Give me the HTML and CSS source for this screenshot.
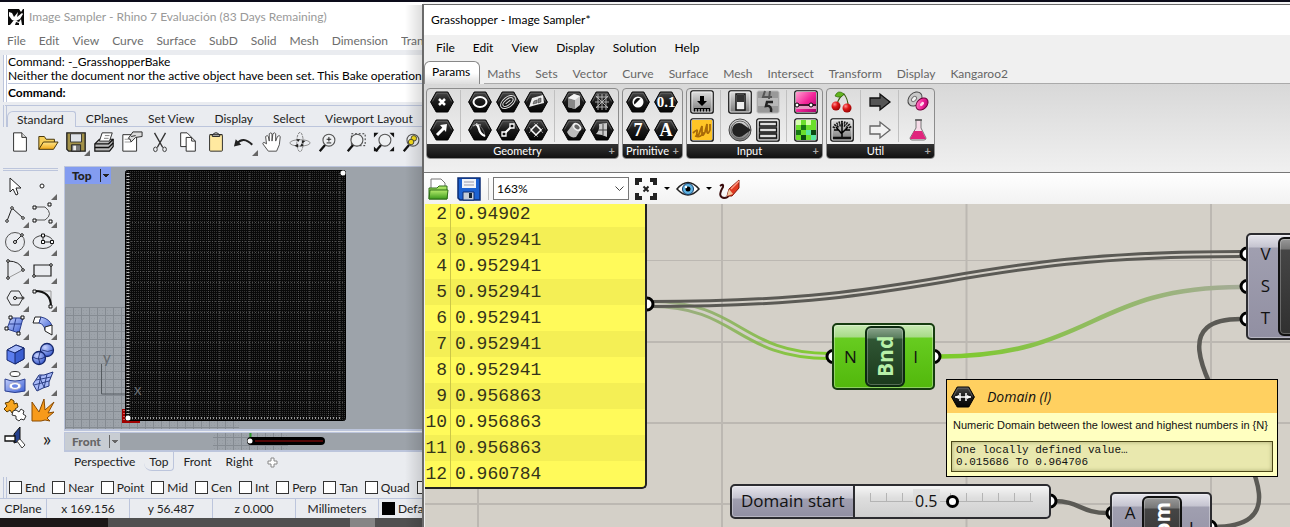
FILE: index.html
```html
<!DOCTYPE html>
<html lang="en">
<head>
<meta charset="utf-8">
<title>Grasshopper - Image Sampler</title>
<link rel="stylesheet" href="styles.css">
</head>
<body>
<svg class="defs" aria-hidden="true">
  <defs>
    <linearGradient id="gHex" x1="0" y1="0" x2="0" y2="1"><stop offset="0" stop-color="#4a4a4a"/><stop offset=".45" stop-color="#1c1c1c"/><stop offset="1" stop-color="#050505"/></linearGradient>
    <linearGradient id="gGray" x1="0" y1="0" x2="0" y2="1"><stop offset="0" stop-color="#e2e2e2"/><stop offset="1" stop-color="#757575"/></linearGradient>
    <linearGradient id="gFold" x1="0" y1="0" x2="0" y2="1"><stop offset="0" stop-color="#ffe68a"/><stop offset="1" stop-color="#f0a818"/></linearGradient>
    <linearGradient id="gBlue" x1="0" y1="0" x2="1" y2="1"><stop offset="0" stop-color="#c4d0fb"/><stop offset="1" stop-color="#3c60d6"/></linearGradient>
    <linearGradient id="gPink" x1="0" y1="0" x2="1" y2="1"><stop offset="0" stop-color="#ff9fd0"/><stop offset=".5" stop-color="#f5259a"/><stop offset="1" stop-color="#a8006c"/></linearGradient>
    <linearGradient id="gGreen" x1="0" y1="0" x2="0" y2="1"><stop offset="0" stop-color="#b6ec6e"/><stop offset="1" stop-color="#3d9c1c"/></linearGradient>
    <radialGradient id="gBall" cx=".35" cy=".3" r=".8"><stop offset="0" stop-color="#c8d4ff"/><stop offset="1" stop-color="#2c50c8"/></radialGradient>
    <radialGradient id="gCherry" cx=".35" cy=".3" r=".8"><stop offset="0" stop-color="#ff9090"/><stop offset=".4" stop-color="#e01818"/><stop offset="1" stop-color="#800"/></radialGradient>
    <symbol id="hex" viewBox="0 0 24 24"><path d="M.6 12 6.2 2h11.6l5.6 10-5.6 10H6.2z" fill="url(#gHex)" stroke="#000"/><path d="M2.4 11.5 6.9 3.2h10.2l4.5 8.3" fill="none" stroke="#777" stroke-width=".6"/></symbol>
    <symbol id="sq" viewBox="0 0 24 24"><rect x=".8" y=".8" width="22.400" height="22.400" rx="2" fill="url(#gGray)" stroke="#111" stroke-width="1.300"/><rect x="2" y="2" width="20" height="20" rx="1" fill="none" stroke="#f4f4f4" stroke-width=".8"/></symbol>
    <symbol id="lens" viewBox="0 0 24 24"><path d="m9 15-6 7" stroke="#111" stroke-width="2.500"/><circle cx="13" cy="10" r="6.500" fill="#eef0f2" stroke="#555" stroke-width="1.200"/></symbol>
    <pattern id="mesh" x="125" y="3" width="4" height="4" patternUnits="userSpaceOnUse"><rect width="4" height="4" fill="#090909"/><path d="M0 1h1v1H0zM2 1h1v1H2zM0 3h1v1H0zM2 3h1v1H2z" fill="#343434"/></pattern>
    <pattern id="meshCol" x="83" width="30" height="2" patternUnits="userSpaceOnUse"><path d="M0 0h1v1H0zM11 0h1v1h-1z" fill="#777"/></pattern>
    <pattern id="meshRow" y="14" width="3" height="30" patternUnits="userSpaceOnUse"><path d="M0 0h1v1H0zM1 11h1v1H1z" fill="#777"/></pattern>
    <pattern id="cplane" width="8" height="8" patternUnits="userSpaceOnUse" x="0" y="140"><path d="M0 .5h8M.5 0v8" stroke="#858b92"/><path d="M2 3h1v1H2zM5 3h1v1H5zM2 6h1v1H2zM5 6h1v1H5z" fill="#949aa1"/></pattern>
  </defs>
</svg>

<div class="desktop">
  <div class="strip"></div>

  <section class="rhino">
    <header class="rhino-title">
      <svg class="i16" viewBox="0 0 16 16"><path d="M0 0h16v16H0z" fill="#0a0a0a"/><path d="M1 3l3 1 2 4 4-5-1 5 5-4 1 1-3 5-4 2-4-1-3-4zM11 0l4 0-2 3z" fill="#fff"/><path d="M2 16l4-5 5 2 2-3 1 6z" fill="#fff"/><path d="M7 16l1-3 3 1 0 2z" fill="#0a0a0a"/></svg>
      <h1>Image Sampler - Rhino 7 Evaluación (83 Days Remaining)</h1>
    </header>
    <nav class="rhino-menu">
      <button>File</button><button>Edit</button><button>View</button><button>Curve</button><button>Surface</button><button>SubD</button><button>Solid</button><button>Mesh</button><button>Dimension</button><button>Transform</button>
    </nav>
    <div class="command">
      <p>Command: -_GrasshopperBake</p>
      <p>Neither the document nor the active object have been set. This Bake operation</p>
      <label class="prompt"><b>Command:</b><input type="text" aria-label="Command"></label>
    </div>
    <div class="rhino-tabs">
      <button class="on">Standard</button><button>CPlanes</button><button>Set View</button><button>Display</button><button>Select</button><button>Viewport Layout</button>
    </div>
    <div class="rhino-tools">
      <button aria-label="New"><svg viewBox="0 0 24 24"><path d="M5 2h9l5 5v15H5z" fill="#fff" stroke="#222"/><path d="M14 2v5h5" fill="#ddd" stroke="#222"/></svg></button>
      <button aria-label="Open"><svg viewBox="0 0 24 24"><path d="M2 20V6h6l2 3h9v4" fill="#f6cf5a" stroke="#3b2b00"/><path d="M2 20l5-8h16l-5 8z" fill="url(#gFold)" stroke="#3b2b00"/></svg></button>
      <button aria-label="Save" class="fly"><svg viewBox="0 0 24 24"><path d="M2 2h20v20H4l-2-2z" fill="#a39249" stroke="#222" stroke-width="1.500"/><path d="M6 3h12v9H6z" fill="#dfe3e8" stroke="#333"/><path d="M7 15h10v7H7z" fill="#777" stroke="#222"/><path d="M9 16h3v5H9z" fill="#eee"/></svg></button>
      <button aria-label="Print"><svg viewBox="0 0 24 24"><path d="M2 14l5-5h15v8l-4 5H2z" fill="#bbb" stroke="#111" stroke-width="1.300"/><path d="M7 11l3-9h11l-3 9z" fill="#fff" stroke="#222"/><path d="M13 5h5M12 8h5" stroke="#777"/><path d="M2 14h15l5-5M2 18h15l5-5" fill="none" stroke="#111" stroke-width="1.500"/></svg></button>
      <button aria-label="Properties"><svg viewBox="0 0 24 24"><path d="M2 4h15v18H2z" fill="#fff" stroke="#222"/><path d="M4 9h8M4 12h7" stroke="#999"/><path d="M8 8l5-7h10v5l-7 1-5 5-1-3z" fill="#ddd" stroke="#222"/><path d="M11 6l5-1" stroke="#222"/></svg></button>
      <button aria-label="Cut"><svg viewBox="0 0 24 24"><path d="M6 2l9 16M18 2 9 18" stroke="#333" stroke-width="1.500"/><ellipse cx="7" cy="20" rx="2" ry="2.500" fill="none" stroke="#333"/><ellipse cx="17" cy="20" rx="2" ry="2.500" fill="none" stroke="#333"/></svg></button>
      <button aria-label="Copy"><svg viewBox="0 0 24 24"><path d="M4 2h7l4 4v11H4z" fill="#fff" stroke="#222"/><path d="M10 7h6l4 4v11H10z" fill="#fff" stroke="#222"/><path d="M16 7v4h4" fill="none" stroke="#222"/></svg></button>
      <button aria-label="Paste"><svg viewBox="0 0 24 24"><rect x="5" y="4" width="14" height="18" rx="1" fill="#ffe9a0" stroke="#222"/><path d="M5 4h14M8 6V4l3-2h2l3 2v2z" fill="#bbb" stroke="#222"/></svg></button>
      <button aria-label="Undo" class="fly"><svg viewBox="0 0 24 24"><path d="M4 14q7-9 17 1" fill="none" stroke="#222" stroke-width="2.200"/><path d="M1 17l2-8 6 6z" fill="#222"/></svg></button>
      <button aria-label="Pan"><svg viewBox="0 0 24 24"><path d="M8 22 2 14q0-3 4 0L5 6q2-2 3 0l1 5V3q2-2 3 0v8l1-8q2-2 3 0v8l2-5q2-2 3 0l-1 9-3 7z" fill="#fff" stroke="#444"/></svg></button>
      <button aria-label="Rotate view"><svg viewBox="0 0 24 24"><ellipse cx="12" cy="13" rx="11" ry="3.500" fill="none" stroke="#888"/><ellipse cx="12" cy="12" rx="3.500" ry="10.500" fill="none" stroke="#777" stroke-dasharray="3 1"/><path d="M8 9l4 0-2 3zM16 16l-4 1 2-4zM6 16l4-2v4zM18 11l-4-1v4z" fill="#222"/></svg></button>
      <button aria-label="Zoom"><svg viewBox="0 0 24 24"><use href="#lens"/><path d="M10.500 9h5M13 6.500v5M10.500 13h5" stroke="#111"/></svg></button>
      <button aria-label="Zoom window"><svg viewBox="0 0 24 24"><rect x="7" y="3" width="15" height="13" fill="none" stroke="#222" stroke-dasharray="2 2"/><use href="#lens"/></svg></button>
      <button aria-label="Zoom extents"><svg viewBox="0 0 24 24"><use href="#lens"/><path d="M1 2h5L1 7zM23 2h-5l5 5zM23 22h-5l5-5zM1 22v-5l5 5z" fill="#111"/></svg></button>
      <button aria-label="Zoom selected"><svg viewBox="0 0 24 24"><use href="#lens"/><circle cx="14" cy="8" r="3" fill="#f7dd1a" stroke="#443"/><circle cx="11" cy="12" r="3" fill="#f7dd1a" stroke="#443"/></svg></button>
    </div>

    <div class="work">
      <aside class="palette">
        <button aria-label="Pointer"><svg viewBox="0 0 24 24"><path d="M7 4v14l3-3 3 6 2-1-2-6h5z" fill="#fff" stroke="#222"/></svg></button>
        <button aria-label="Point" class="fly"><svg viewBox="0 0 24 24"><circle cx="11" cy="12" r="2" fill="#fff" stroke="#222"/></svg></button>
        <button aria-label="Polyline" class="fly"><svg viewBox="0 0 24 24"><path d="M4 19 9 6l11 10" fill="none" stroke="#222"/><g fill="#fff" stroke="#222"><circle cx="4" cy="19" r="1.300"/><circle cx="9" cy="6" r="1.300"/><circle cx="20" cy="16" r="1.300"/></g></svg></button>
        <button aria-label="Curve" class="fly"><svg viewBox="0 0 24 24"><path d="M4 5h10q9 7 0 13H4" fill="none" stroke="#555"/><path d="M2 4h3v3H2zM17 1h3v3h-3zM2 17h3v3H2zM18 18h3v3h-3z" fill="#fff" stroke="#111"/></svg></button>
        <button aria-label="Circle" class="fly"><svg viewBox="0 0 24 24"><circle cx="12" cy="12" r="9.500" fill="none" stroke="#555"/><path d="m12 12 7-7" stroke="#222"/><circle cx="12" cy="12" r="1.500" fill="#fff" stroke="#111"/><circle cx="19" cy="5" r="1.300" fill="#fff" stroke="#111"/></svg></button>
        <button aria-label="Ellipse" class="fly"><svg viewBox="0 0 24 24"><ellipse cx="12" cy="12" rx="10" ry="6.500" fill="none" stroke="#444"/><path d="M12 6v6h9" fill="none" stroke="#222"/><path d="M10.500 4h3v3h-3zM10.500 10.500h3v3h-3zM19.500 10.500h3v3h-3z" fill="#fff" stroke="#111"/></svg></button>
        <button aria-label="Arc" class="fly"><svg viewBox="0 0 24 24"><path d="M5 20 20 12" stroke="#999"/><path d="M5 20V3q12 0 15 9" fill="none" stroke="#222"/><g fill="#fff" stroke="#111"><circle cx="5" cy="3" r="1.300"/><circle cx="5" cy="20" r="1.300"/><circle cx="20" cy="12" r="1.300"/></g></svg></button>
        <button aria-label="Rectangle" class="fly"><svg viewBox="0 0 24 24"><path d="M3 7h17v11H3z" fill="none" stroke="#222" stroke-width="1.200"/><circle cx="3" cy="18" r="1.300" fill="#fff" stroke="#111"/><circle cx="20" cy="7" r="1.300" fill="#fff" stroke="#111"/></svg></button>
        <button aria-label="Polygon" class="fly"><svg viewBox="0 0 24 24"><path d="m4 12 4-7h8l4 7-4 7H8z" fill="none" stroke="#333"/><path d="M12 12h8" stroke="#222"/><circle cx="12" cy="12" r="1.500" fill="#fff" stroke="#111"/><circle cx="20" cy="12" r="1" fill="#fff" stroke="#111"/></svg></button>
        <button aria-label="Fillet" class="fly"><svg viewBox="0 0 24 24"><path d="M4 5h16v16" fill="none" stroke="#999"/><path d="M4 5q16 0 16 16" fill="none" stroke="#111" stroke-width="2"/><path d="M2 4h3v3H2zM18 19h3v3h-3z" fill="#fff" stroke="#111"/></svg></button>
        <button aria-label="Surface" class="fly"><svg viewBox="0 0 24 24"><path d="M8 4h12l-4 15-12-4z" fill="url(#gBlue)" stroke="#2a3f90"/><path d="m13 4-3 13M6 10h12" stroke="#2a3f90"/><path d="M6 2h3v3H6zM18 2h3v3h-3zM2 13h3v3H2zM14 18h3v3h-3z" fill="#fff" stroke="#111"/></svg></button>
        <button aria-label="Surface from curves" class="fly"><svg viewBox="0 0 24 24"><path d="M4 3h6L8 9H2z" fill="#fff" stroke="#222"/><path d="M10 3q9 2 11 9l-7 4Q13 10 8 9z" fill="url(#gBlue)" stroke="#2a3f90"/><path d="M21 11v10l-7-4v-4z" fill="#fff" stroke="#222"/></svg></button>
        <button aria-label="Box" class="fly"><svg viewBox="0 0 24 24"><path d="M4 8l9-5 8 3v11l-9 5-8-4z" fill="#5b7dee" stroke="#16286e"/><path d="M4 8l8 3 9-5-8-3z" fill="#a9bcfa" stroke="#16286e"/><path d="M12 11v11l9-5V6z" fill="#3c5fd0" stroke="#16286e"/></svg></button>
        <button aria-label="Boolean union" class="fly"><svg viewBox="0 0 24 24"><circle cx="16" cy="8" r="6.500" fill="url(#gBall)" stroke="#14266c" stroke-width="1.300"/><circle cx="8" cy="16" r="6.500" fill="url(#gBall)" stroke="#14266c" stroke-width="1.300"/><path d="M2 15q6 4 12 0M9 10q-3 6 0 12M11 8q6 3 11 0" fill="none" stroke="#14266c" stroke-width=".8"/></svg></button>
        <button aria-label="Project" class="fly"><svg viewBox="0 0 24 24"><ellipse cx="12" cy="4" rx="5" ry="2.500" fill="#fff" stroke="#333"/><path d="M2 9q10 4 20 0v12q-10 3-20 0z" fill="url(#gBlue)" stroke="#2a3f90"/><ellipse cx="12" cy="16" rx="6" ry="3.500" fill="#fff" stroke="#aac"/><ellipse cx="12" cy="16" rx="3" ry="1.800" fill="#6a86e4"/></svg></button>
        <button aria-label="Mesh" class="fly"><svg viewBox="0 0 24 24"><path d="M2 14 8 5l5 0 9-3-4 10 0 4-6 2-6 3z" fill="#a8baf8" stroke="#22357c"/><path d="m5 10 15-3M3 15l15-4M10 5l-3 15M16 4l-3 14M8 6l5 11" fill="none" stroke="#22357c" stroke-width=".9"/></svg></button>
        <button aria-label="Explode parts"><svg viewBox="0 0 24 24"><path d="M2 5l4-1 2-3 3 2 0 3 3-1 1 4-3 2 1 3-4 1-2-3-3 2-3-3 3-3z" fill="#f7a51e" stroke="#5a3a00"/><path d="M10 13l3-1 3 2 2-3 3 2-1 3 3 2-2 4-3-1-2 2-3-2 0-3-4-1z" fill="#fff" stroke="#333"/></svg></button>
        <button aria-label="Explode"><svg viewBox="0 0 24 24"><path d="M1 23V4l7 10L13 1l1 11 9-8-6 11 6-1-7 6 3 3-5-1-4 1z" fill="#f79a1a" stroke="#8a4a00"/></svg></button>
        <button aria-label="Trim"><svg viewBox="0 0 24 24"><path d="M11 8 17 1v14l-6 2z" fill="#24408e" stroke="#111"/><path d="M2 10h10v5H2z" fill="#fff" stroke="#111" stroke-width="1.300"/><path d="m14 15 3-2 5 6-3 3z" fill="#fff" stroke="#444"/></svg></button>
        <button class="more">»</button>
      </aside>
      <div class="views">
        <div class="view">
          <svg class="scene" width="358" height="262" viewBox="0 0 358 262">
            <rect y="140" width="174" height="122" fill="url(#cplane)"/>
            <path d="M36.500 197v30h24" fill="none" stroke="#555b60"/>
            <text x="38" y="196">y</text>
            <path d="M57 242h5v8h13v6H57z" fill="#a00000"/><path d="M59 243v10h15" fill="none" stroke="#ffb0b0" stroke-dasharray="1 2"/>
            <rect x="60.500" y="3.500" width="220" height="250" rx="2" fill="url(#mesh)" stroke="#000"/>
            <rect x="66" y="5" width="212" height="246" fill="url(#meshCol)" opacity=".55"/><rect x="66" y="5" width="212" height="246" fill="url(#meshRow)" opacity=".6"/>
            <path d="M63 6v244" stroke="#bbb" stroke-width="3" stroke-dasharray="1 2"/><path d="M64 251h212" stroke="#999" stroke-width="2" stroke-dasharray="1 2"/>
            <circle cx="63" cy="251" r="2.500" fill="#fff"/><circle cx="278" cy="6" r="2.500" fill="#fff"/>
            <text x="69" y="228">x</text>
          </svg>
          <button class="view-label active"><b>Top</b><i></i></button>
        </div>
        <div class="view small">
          <svg class="scene" width="358" height="17" viewBox="0 0 358 17"><rect x="148" width="75" height="17" fill="url(#cplane)"/><path d="M185.500 0v6" stroke="#2d9a2d" stroke-width="2"/><rect x="182" y="4" width="78" height="8" rx="4"/><path d="M190 8h68" stroke="#a40c0c"/><circle cx="185" cy="8" r="2.500" fill="#fff"/></svg>
          <button class="view-label"><b>Front</b><i></i></button>
        </div>
        <div class="view-tabs"><button>Perspective</button><button class="on">Top</button><button>Front</button><button>Right</button><button aria-label="New layout"><svg width="11" height="11" viewBox="0 0 11 11"><path d="M4 1h3v3h3v3H7v3H4V7H1V4h3z" fill="#fff" stroke="#888"/></svg></button></div>
      </div>
    </div>
    <div class="osnap">
      <label><input type="checkbox">End</label><label><input type="checkbox">Near</label><label><input type="checkbox">Point</label><label><input type="checkbox">Mid</label><label><input type="checkbox">Cen</label><label><input type="checkbox">Int</label><label><input type="checkbox">Perp</label><label><input type="checkbox">Tan</label><label><input type="checkbox">Quad</label><label><input type="checkbox" aria-label="Knot"></label>
    </div>
    <footer class="status"><span>CPlane</span><span>x 169.156</span><span>y 56.487</span><span>z 0.000</span><span>Millimeters</span><span class="layer"><i></i>Default</span></footer>
    <div class="behind"></div>
  </section>

  <section class="gh">
    <header class="gh-title"><h2>Grasshopper - Image Sampler*</h2></header>
    <nav class="gh-menu"><button>File</button><button>Edit</button><button>View</button><button>Display</button><button>Solution</button><button>Help</button></nav>
    <div class="gh-tabs"><button class="on">Params</button><button>Maths</button><button>Sets</button><button>Vector</button><button>Curve</button><button>Surface</button><button>Mesh</button><button>Intersect</button><button>Transform</button><button>Display</button><button>Kangaroo2</button></div>

    <div class="ribbon">
      <div class="panel">
        <div class="groups">
          <div class="group c1">
            <svg viewBox="0 0 24 24"><use href="#hex"/><path d="m9 9 6 6m0-6-6 6" stroke="#fff" stroke-width="2.500"/></svg>
            <svg viewBox="0 0 24 24"><use href="#hex"/><path d="m7 17 7-7" stroke="#fff" stroke-width="3"/><path d="m10 7 7-1-1 8z" fill="#fff"/></svg>
          </div>
          <div class="group c3">
            <svg viewBox="0 0 24 24"><use href="#hex"/><ellipse cx="12" cy="12" rx="6.500" ry="5" fill="none" stroke="#fff" stroke-width="2"/></svg>
            <svg viewBox="0 0 24 24"><use href="#hex"/><g fill="none" stroke="#ddd" transform="rotate(-38 12 12)"><ellipse cx="12" cy="12" rx="8.500" ry="5"/><ellipse cx="12" cy="12" rx="6" ry="2.800"/><path d="M9 12h6"/></g></svg>
            <svg viewBox="0 0 24 24"><use href="#hex"/><path d="M5 17 8 8l11-3 1 8-8 2z" fill="#eee"/><path d="m9 14 1-3 3-1 0 3zM14 9l3-1 0 4-3 1z" fill="#888" stroke="#333" stroke-width=".5"/></svg>
            <svg viewBox="0 0 24 24"><use href="#hex"/><path d="M6 6q10 1 11 13" fill="none" stroke="#777" stroke-width=".8"/><path d="M8 6q2 1 3 5 1 5 6 7" fill="none" stroke="#fff" stroke-width="2.200"/><path d="M5 8q3-3 8-1" fill="none" stroke="#bbb"/></svg>
            <svg viewBox="0 0 24 24"><use href="#hex"/><path d="m8 16 9-9" stroke="#fff" stroke-width="2"/><path d="M6 14h4v4H6zM14 6h4v4h-4z" fill="#111" stroke="#fff" stroke-width="1.300"/></svg>
            <svg viewBox="0 0 24 24"><use href="#hex"/><path d="m5 9 9 10M10 5l9 10M5 15l9-10M10 19l9-9" stroke="#888"/><path d="m12 7 5 5-5 5-5-5z" fill="#333" stroke="#fff" stroke-width="1.500"/></svg>
          </div>
          <div class="group c2">
            <svg viewBox="0 0 24 24"><use href="#hex"/><path d="M6 8l6-4 6 2v9l-5 4-7-2z" fill="#ccc"/><path d="M6 8l7 2v9l-7-2z" fill="#888"/><path d="M6 8l6-4 6 2-5 4z" fill="#f4f4f4"/></svg>
            <svg viewBox="0 0 24 24"><use href="#hex"/><path d="M6 7h12M5 12h14M6 17h12M8 4v16M12 4v16M16 4v16M6 6l12 12M18 6 6 18" stroke="#bbb" stroke-width=".9"/></svg>
            <svg viewBox="0 0 24 24"><use href="#hex"/><path d="M5 14 11 6l8 5-5 8q-6 2-9-5z" fill="#bbb"/><ellipse cx="15" cy="9" rx="5" ry="3.500" fill="#eee" transform="rotate(38 15 9)"/><ellipse cx="15" cy="9" rx="3" ry="2" fill="#666" transform="rotate(38 15 9)"/></svg>
            <svg viewBox="0 0 24 24"><use href="#hex"/><path d="M9 6l8-1v14l-5-2-6-1q4-4 3-10z" fill="#ccc"/><path d="M13 6v11M8 12h9" stroke="#444"/></svg>
          </div>
        </div>
        <h3>Geometry<i>+</i></h3>
      </div>
      <div class="panel">
        <div class="groups"><div class="group c2">
          <svg viewBox="0 0 24 24"><use href="#hex"/><circle cx="12" cy="12" r="5.500" fill="#fff"/><path d="M8.500 14.500a4.500 4.500 0 0 1 6-6z" fill="#111"/></svg>
          <svg viewBox="0 0 24 24"><use href="#hex"/><text class="glyph serif" x="12" y="17">0.1</text></svg>
          <svg viewBox="0 0 24 24"><use href="#hex"/><text class="glyph serif big" x="12" y="18">7</text></svg>
          <svg viewBox="0 0 24 24"><use href="#hex"/><text class="glyph serif big" x="12" y="18">A</text></svg>
        </div></div>
        <h3>Primitive<i>+</i></h3>
      </div>
      <div class="panel">
        <div class="groups">
          <div class="group c1">
            <svg viewBox="0 0 24 24"><use href="#sq"/><path d="M10 6h4v5h3l-5 5-5-5h3zM4 18h16v1H4z"/><path d="M4 20h17" stroke="#000" stroke-width="3" stroke-dasharray="1 2"/></svg>
            <svg viewBox="0 0 24 24"><use href="#sq"/><path d="M2 2h20v20H2z" fill="#ffc526"/><path d="M3 15q5-5 4-1-1 6 2 2l3-8v8q1 3 3-2l2-8v8q1 3 3-2V6M5 18q7 2 8-4" fill="none" stroke="#a86a08" stroke-width="1.800"/></svg>
          </div>
          <div class="group c2">
            <svg viewBox="0 0 24 24"><use href="#sq"/><path d="M8 4h9v16H8z" fill="#eee" stroke="#111" stroke-width="1.500"/><path d="M9 5h7v7H9z" fill="#333"/></svg>
            <svg viewBox="0 0 24 24"><rect x=".8" y=".8" width="22.400" height="22.400" rx="2" fill="#999" stroke="#ccc"/><path d="M2 8h20v8H2z" fill="#b8b8b8"/><path d="M9 1 7 7h9M14 1l-1 8" fill="none" stroke="#555" stroke-width="2"/><path d="M17 12h-6l-1 4q6-1 5 6" fill="none" stroke="#222" stroke-width="2.500"/></svg>
            <svg viewBox="0 0 24 24"><circle cx="12" cy="12" r="11" fill="url(#gGray)" stroke="#444"/><circle cx="12" cy="12" r="9" fill="none" stroke="#666"/><path d="M16 7l7 5-7 5a7 7 0 1 1 0-10z" fill="#222"/></svg>
            <svg viewBox="0 0 24 24"><use href="#sq"/><path d="M3.500 4h17v4h-17zM3.500 10h17v4h-17zM3.500 16h17v4h-17z" fill="#ddd" stroke="#111" stroke-width="1.300"/></svg>
          </div>
          <div class="group c1">
            <svg viewBox="0 0 24 24"><use href="#sq"/><path d="M2 2h20v20H2z" fill="url(#gPink)"/><path d="M2 16h20v3H2z" fill="#e898c4"/><path d="M2 15h20" stroke="#111" stroke-width="1.500"/><circle cx="3" cy="15" r="2" fill="#fff" stroke="#000"/><circle cx="17" cy="15" r="2" fill="#fff" stroke="#000"/></svg>
            <svg viewBox="0 0 24 24"><use href="#sq"/><path d="M2 2h20v20H2z" fill="#6be02c"/><path d="M2 2h5v5H2zM12 2h5v5h-5z" fill="#d6ffae"/><path d="M7 7h5v5H7zM2 12h5v5H2z" fill="#167812"/><path d="M7 17h5v5H7zM17 12h5v5h-5z" fill="#0a4c10"/><path d="M12 12h5v5h-5zM17 17h5v5h-5z" fill="#59e8a0"/></svg>
          </div>
        </div>
        <h3>Input<i>+</i></h3>
      </div>
      <div class="panel">
        <div class="groups">
          <div class="group c1">
            <svg viewBox="0 0 24 24"><path d="M7 14Q9 7 14 4q4 5 4 12" fill="none" stroke="#3b5c10" stroke-width="1.200"/><path d="M14 4Q8-1 5 6q6 3 9-2z" fill="#63b51e" stroke="#2f6a08" stroke-width=".7"/><circle cx="6" cy="16" r="4.500" fill="url(#gCherry)"/><circle cx="17" cy="18" r="4.500" fill="url(#gCherry)"/></svg>
            <svg viewBox="0 0 24 24"><use href="#sq"/><path d="M12 20V12M12 16 6 9M12 15l6-6M12 13V5M9 12l-5 0M15 12h5" stroke="#000" stroke-width="1.500"/><path d="M3 20h18" stroke="#111" stroke-width="2.500"/><path d="M3.500 10q2-5 8.500-6 7 1 8.500 6M7 9q5-4 10 0" fill="none" stroke="#111" stroke-width="2.500" stroke-dasharray="1.500 1"/></svg>
          </div>
          <div class="group c1">
            <svg viewBox="0 0 24 24"><path d="M2 8h10V4l10 8-10 8v-4H2z" fill="#555" stroke="#111" stroke-width="1.300"/></svg>
            <svg viewBox="0 0 24 24"><path d="M2 8h10V4l10 8-10 8v-4H2z" fill="#f2f2f2" stroke="#666" stroke-width="1.300"/></svg>
          </div>
          <div class="group c1">
            <svg viewBox="0 0 24 24"><ellipse cx="9" cy="9" rx="8" ry="6" fill="#c9c9c9" stroke="#444" transform="rotate(-45 9 9)"/><ellipse cx="8" cy="9" rx="3" ry="2" fill="#f4f4f4" stroke="#777" transform="rotate(-45 8 9)"/><ellipse cx="16" cy="14" rx="7" ry="5" fill="url(#gPink)" stroke="#70003c" transform="rotate(-45 16 14)"/><ellipse cx="16" cy="14" rx="2.500" ry="1.500" fill="#ffd9ec" transform="rotate(-45 16 14)"/></svg>
            <svg viewBox="0 0 24 24"><path d="M10 2h5v8l5 10q0 2-2 2H6q-2 0-2-2l6-10z" fill="#f6dce8" stroke="#777"/><path d="M8 13h8l4 8H4z" fill="#e0257c"/><path d="M9 2h7" stroke="#555" stroke-width="1.500"/></svg>
          </div>
        </div>
        <h3>Util<i>+</i></h3>
      </div>
    </div>

    <div class="gh-bar">
      <button aria-label="Open file"><svg viewBox="0 0 24 24"><path d="M4 11V2h10l4 4v5" fill="#fff" stroke="#777"/><path d="M2 22V11h8l2-2h8v13z" fill="url(#gGreen)" stroke="#2f6f18"/><path d="M2 22l1-9h18l-1 9z" fill="url(#gGreen)" stroke="#2f6f18"/></svg></button>
      <button aria-label="Save file"><svg viewBox="0 0 24 24"><path d="M1 1h22v22H3l-2-2z" fill="#1c62d2" stroke="#0b2d74" stroke-width="1.500"/><path d="M5 2h14v9H5z" fill="#f1f4f8"/><path d="M7 5h10M7 8h10" stroke="#99a"/><path d="M6 15h11v8H6z" fill="#c4ccd8" stroke="#0b2d74"/><path d="M12 16h3v5h-3z" fill="#123"/></svg></button>
      <hr>
      <select aria-label="Zoom"><option>163%</option></select>
      <button aria-label="Zoom extents"><svg viewBox="0 0 24 24"><path d="M3 8V3h5M16 3h5v5M21 16v5h-5M8 21H3v-5" fill="none" stroke="#222" stroke-width="4"/><path d="m9.500 9.500 5 5m0-5-5 5" stroke="#222" stroke-width="2"/></svg></button><i class="caret"></i>
      <button aria-label="Preview"><svg viewBox="0 0 24 24"><path d="M1 12q11-13 22 0-11 12-22 0z" fill="#fff" stroke="#222" stroke-width="1.500"/><circle cx="12" cy="12" r="5.500" fill="#5fb4e4" stroke="#123a66"/><circle cx="12" cy="12" r="2.500"/><circle cx="10" cy="10" r="1.200" fill="#fff"/></svg></button><i class="caret"></i>
      <button aria-label="Sketch"><svg viewBox="0 0 24 24"><path d="M2 9q4-3 3 1-6 10 1 11 4 0 5-3" fill="none" stroke="#3a0c0c" stroke-width="2"/><path d="m9 19 2-7 10-9v8l-7 8z" fill="#e03a22" stroke="#7c1408"/><path d="m9 19 2-7 4 5z" fill="#f3c79c"/><path d="m13 12 8-8" stroke="#ff9a84" stroke-width="1.500"/></svg></button>
    </div>

    <main class="canvas">
      <svg class="wires" width="100%" height="323">
        <defs>
          <linearGradient id="w1" gradientUnits="userSpaceOnUse" x1="224" y1="0" x2="404" y2="0"><stop offset="0" stop-color="#8f9c7c" stop-opacity=".75"/><stop offset="1" stop-color="#7fce2a"/></linearGradient>
          <linearGradient id="w2" gradientUnits="userSpaceOnUse" x1="515" y1="0" x2="818" y2="0"><stop offset="0" stop-color="#7ccc28"/><stop offset="1" stop-color="#a5ab98"/></linearGradient>
        </defs>
        <path d="M53 285v38M297 0v323M541.500 0v323M786 0v323" stroke="#bcb8b2" stroke-width="2"/>
        <path d="M0 56.500h1600" stroke="#bcb8b2"/><path d="M0 138h1600M0 219h1600M0 300h1600" stroke="#bcb8b2" stroke-width="2"/>
        <g fill="none">
          <g stroke="url(#w1)" stroke-width="3"><path d="M226 97.500C316 97.500 316 149.500 404 149.500"/><path d="M226 102.500C312 102.500 312 154.500 404 154.500"/></g>
          <g stroke="#5b5a55" stroke-width="3"><path d="M226 97.500C522 97.500 522 47.500 816 47.500"/><path d="M226 102.500C522 102.500 522 52.500 816 52.500"/></g>
          <path d="M515 152.500C667 152.500 667 83 816 83" stroke="url(#w2)" stroke-width="4.500"/>
          <g stroke="#5b5a55" stroke-width="4.500"><path d="M788 323C932 323 680 115 816 115"/><path d="M629 297C655 297 655 309 683 309"/></g>
        </g>
        <g fill="#fff" stroke="#000" stroke-width="3"><circle cx="222" cy="100" r="6"/><circle cx="408" cy="152.500" r="6"/><circle cx="509" cy="152.500" r="6"/><circle cx="822" cy="50" r="6"/><circle cx="822" cy="82.500" r="6"/><circle cx="822" cy="115" r="6"/><circle cx="625" cy="297" r="6"/><circle cx="688" cy="309" r="6"/><circle cx="785" cy="323" r="6"/></g>
      </svg>

      <ol class="data" start="2">
        <li><span>2</span>0.94902</li><li><span>3</span>0.952941</li><li><span>4</span>0.952941</li><li><span>5</span>0.952941</li><li><span>6</span>0.952941</li><li><span>7</span>0.952941</li><li><span>8</span>0.952941</li><li><span>9</span>0.956863</li><li><span>10</span>0.956863</li><li><span>11</span>0.956863</li><li><span>12</span>0.960784</li>
      </ol>

      <div class="node bnd"><span>N</span><b>Bnd</b><span>I</span></div>
      <div class="node remap"><div><span>V</span><span>S</span><span>T</span></div><b>ReMap</b></div>
      <label class="node slider"><span>Domain start</span><span class="track"><output>0.5</output><input type="range" min="0" max="1" step="0.1" value="0.5"></span></label>
      <div class="node dom"><div><span>A</span></div><b>Dom</b><span class="out">I</span></div>

      <div class="tip" role="tooltip">
        <header><svg viewBox="0 0 24 24"><use href="#hex"/><path d="M4 12h16M9 8v8M15 8v8" stroke="#fff" stroke-width="1.500"/><path d="m4 12 4-2v4zM20 12l-4-2v4z" fill="#fff"/></svg><em>Domain (I)</em></header>
        <p>Numeric Domain between the lowest and highest numbers in {N}</p>
        <pre>One locally defined value…
0.015686 To 0.964706</pre>
      </div>
    </main>
  </section>
</div>
</body>
</html>
```
FILE: styles.css
```css
:root {
  --ui: Lato, "Open Sans", sans-serif;
  --canvas: "Open Sans", "Noto Sans", sans-serif;
  --face: #eaecf0;
  --line: #bcc5dc;
}
* { box-sizing: border-box; }
body { margin: 0; font: 12px/16px var(--ui); color: #222; overflow: hidden; }
button { border: 0; padding: 0; margin: 0; background: none; font: inherit; color: inherit; white-space: nowrap; }
h1, h2, h3, p, ol, pre { margin: 0; padding: 0; font: inherit; list-style: none; }
svg { display: block; }
.defs { position: absolute; width: 0; height: 0; }

.desktop { display: grid; grid-template-columns: 423fr 867fr; grid-template-rows: 2px 1fr; min-height: 100vh; background: #f4f4f4; }
.strip { grid-column: 1 / -1; background: #0c0c1a; }

/* Rhino window */
.rhino { position: relative; min-width: 0; overflow: hidden; display: flex; flex-direction: column; background: var(--face); white-space: nowrap; }
.rhino::after { content: ""; position: absolute; inset: 3px 0 0 auto; width: 18px; background: linear-gradient(90deg, transparent, rgba(0, 0, 0, .14)); pointer-events: none; }
.rhino-title { display: flex; align-items: center; gap: 5px; height: 29px; padding-left: 8px; background: #fff; color: #999; }
.i16 { width: 16px; height: 16px; }
.rhino-menu { display: flex; gap: 13px; height: 19px; padding: 2px 0 0 7px; background: #fff; color: #6d6d6d; }
.rhino-menu button { flex: none; height: 16px; }
.rhino-menu button:last-child { flex: 1 1 0; min-width: 0; overflow: hidden; text-align: left; }
.command { margin: 5px 0 3px 3px; padding-left: 1px; border-left: 4px double var(--line); background: #fff; color: #000; line-height: 14px; }
.command p { height: 14px; }
.prompt { display: flex; height: 19px; border-top: 1px solid var(--line); align-items: center; }
.prompt input { border: 0; flex: 1; min-width: 0; height: 14px; outline: 0; background: none; }
.rhino-tabs { display: flex; align-items: flex-end; height: 22px; margin-left: 3px; border-top: 1px solid var(--line); border-left: 4px double var(--line); }
.rhino-tabs button { height: 16px; padding: 0 10px; border-bottom: 1px solid var(--line); flex: none; }
.rhino-tabs button:last-child { flex: 1 0 auto; padding-right: 0; text-align: left; }
.rhino-tabs .on { padding: 0 11px 0 9px; border: 1px solid var(--line); border-bottom: 0; border-radius: 6px 3px 0 0; }
.rhino-tools { display: flex; gap: 4px; height: 36px; padding: 3px 0 0 8px; }
.rhino-tools button, .palette button { position: relative; flex: none; width: 24px; height: 24px; }
.rhino-tools svg { width: 22px; height: 22px; margin: 1px; }
.palette svg { width: 24px; height: 24px; }
.fly::after { content: ""; position: absolute; right: -2px; bottom: -2px; border: 3px solid; border-color: transparent #666 #666 transparent; }
.work { display: flex; padding: 3px 0 0 3px; }
.palette { display: grid; grid-template-columns: 24px 24px; grid-auto-rows: 24px; gap: 4px; align-content: start; flex: none; width: 61px; padding-top: 8px; background: linear-gradient(var(--line), var(--line)) 0 2px / 55px 1px no-repeat, linear-gradient(var(--line), var(--line)) 0 4px / 55px 1px no-repeat; }
.palette .more { font-size: 20px; line-height: 20px; padding: 0 0 0 8px; }
.views { flex: 1; min-width: 0; }
.view { position: relative; border: 1px solid var(--line); border-width: 1px 0 2px 1px; background: #9da3aa; overflow: hidden; }
.view.small { margin-top: 1px; }
.scene text { font: 15px var(--ui); fill: #666b70; }
.view-label { position: absolute; left: 0; top: 0; display: flex; align-items: center; gap: 8px; height: 17px; padding: 0 2px 0 7px; background: #c8cdd3; color: #666; font: bold 12px var(--ui); }
.view-label.active { background: #839cf0; color: #222; }
.view-label i { width: 9px; height: 13px; border-left: 1px solid; background: linear-gradient(currentColor, currentColor) 2px 5px / 6px 1px no-repeat, linear-gradient(currentColor, currentColor) 3px 6px / 4px 1px no-repeat, linear-gradient(currentColor, currentColor) 4px 7px / 2px 1px no-repeat; }
.view-tabs { display: flex; align-items: flex-start; height: 25px; padding-left: 5px; gap: 4px; }
.view-tabs button { height: 19px; padding: 1px 5px 0; }
.view-tabs .on { border: 1px solid var(--line); border-width: 0 1px 1px 0; border-radius: 0 0 4px 8px; }
.osnap { display: flex; gap: 7px; height: 21px; margin-left: 3px; padding-left: 2px; border-left: 4px double var(--line); }
.osnap label { display: flex; align-items: center; gap: 3px; }
.osnap input { appearance: none; width: 13px; height: 13px; margin: 0; border: 1px solid #333; background: #fff; flex: none; }
.status { display: grid; grid-template-columns: 46px repeat(4, 83px) 1fr; height: 20px; border-top: 1px solid var(--line); line-height: 19px; text-align: center; }
.status span + span { border-left: 1px solid var(--line); }
.status .layer { display: flex; align-items: center; gap: 3px; min-width: 0; padding-left: 3px; overflow: hidden; }
.layer i { width: 13px; height: 13px; background: #000; flex: none; }
.behind { flex: 1; min-height: 9px; background: linear-gradient(90deg, #1c1818 108px, #505050 108px, #505050 350px, #858585 350px, #858585 375px, #505050 375px); }

/* Grasshopper window */
.gh { min-width: 0; margin: 2px 0 0 -1px; display: flex; flex-direction: column; border: solid #6a6a6a; border-width: 1px 0 0 2px; background: #f0f0f0; position: relative; color: #000; }
.gh-title { height: 30px; padding: 7px 0 0 7px; background: #fff; }
.gh-menu { display: flex; gap: 18px; height: 26px; padding: 5px 0 0 12px; }
.gh-menu button { height: 16px; }
.gh-tabs { display: flex; height: 23px; color: #666; background: linear-gradient(#aaa, #aaa) 60px 100% / 100% 1px no-repeat; }
.gh-tabs button { padding: 2px 8px 0 7px; }
.gh-tabs .on { border: 1px solid #888; border-bottom: 0; border-radius: 6px 6px 0 0; padding: 0 9px 2px 7px; background: linear-gradient(#fff 50%, #ddd); color: #000; }
.ribbon { display: flex; align-items: flex-start; gap: 3px; height: 88px; padding: 4px 2px 0; background: linear-gradient(#d8d8d8, #f0f0f0); }
.panel { border: 1px solid #8c8c8c; border-radius: 4px; overflow: hidden; background: linear-gradient(#dcdcdc, #f4f4f4); }
.groups { display: flex; padding: 1px 4px 2px 3px; }
.group { display: grid; gap: 4px; grid-auto-rows: 24px; grid-template-columns: 24px; }
.group + .group { margin-left: 6px; padding-left: 7px; border-left: 1px solid #c0c0c0; }
.c2 { grid-template-columns: 24px 24px; }
.c3 { grid-template-columns: 24px 24px 24px; }
.panel h3 { position: relative; height: 14px; padding-right: 10px; background: linear-gradient(#333, #111); color: #fff; font-size: 11px; line-height: 13px; text-align: center; }
.panel h3 i { position: absolute; right: 3px; top: 0; color: #aaa; font-style: normal; font-weight: bold; }
.glyph { font: bold 15px "Liberation Serif", serif; fill: #fff; text-anchor: middle; }
.glyph.big { font-size: 18px; }
.gh-bar { display: flex; align-items: center; height: 32px; padding: 0 3px; border-top: 1px solid #777; background: linear-gradient(#fff, #f2f2f2); }
.gh-bar button { width: 24px; height: 24px; }
.gh-bar button + button { margin-left: 6px; }
.gh-bar hr { width: 1px; height: 22px; margin: 0 4px 0 7px; border: 0; background: #bbb; }
.gh-bar select { appearance: none; width: 136px; height: 23px; margin-right: 5px; padding: 0 3px; border: 1px solid #777; border-radius: 0; font: 12px var(--ui); color: #000; background: #fff url("data:image/svg+xml,%3Csvg xmlns='http://www.w3.org/2000/svg' width='9' height='6'%3E%3Cpath d='M0.500 0.500 4.500 4.500 8.500 0.500' fill='none' stroke='%23444'/%3E%3C/svg%3E") right 4px center no-repeat; }
.caret { border: 3px solid transparent; border-top-color: #000; margin: 3px 6px 0; }

.canvas { position: relative; flex: 1; min-height: 323px; margin-left: 1px; overflow: hidden; background: #d4d0c8; font-family: var(--canvas); font-size: 17px; }
.wires { position: absolute; inset: 0; }
.data { position: absolute; left: 0; top: -3px; width: 222px; border: 2px solid #222; border-width: 0 2px 2px 0; border-radius: 0 0 5px; overflow: hidden; font: 18px/26px "Liberation Mono", monospace; background: #fffa5a; color: #35341a; }
.data li { height: 26px; white-space: nowrap; }
.data li:nth-child(even) { background: #f4ef55; }
.data span { display: inline-block; width: 26px; margin-right: 4px; padding-right: 3px; border-right: 1px solid #ccc748; text-align: right; }
.node { position: absolute; display: flex; border: 2px solid #2c2c30; border-radius: 5px; color: #111; line-height: 24px; background: linear-gradient(#e6e5ec, #c5c4d0 12px, #a09fb0 13px, #918fa2); box-shadow: inset 0 0 0 1px rgba(255, 255, 255, .35); }
.node b { display: flex; align-items: center; justify-content: center; writing-mode: vertical-rl; transform: rotate(180deg); width: 40px; border: 2px solid #111; border-radius: 6px; color: #fff; font-size: 21px; line-height: 36px; background: linear-gradient(0deg, #999, #777 10px, #454545 11px, #303030); box-shadow: inset 0 0 0 1px rgba(255, 255, 255, .25); }
.bnd { left: 407px; top: 119px; width: 103px; height: 67px; padding: 2px 15px 2px 10px; align-items: center; justify-content: space-between; border-color: #163c10; background: linear-gradient(#c8ebb4, #a8da88 12px, #67cc20 13px, #52b80c); }
.bnd b { height: 61px; border-color: #0c2a10; color: #b8f0a8; background: linear-gradient(0deg, #8aa48c, #587c5c 10px, #305634 11px, #1b3a1c); }
.remap { left: 821px; top: 29px; width: 102px; height: 107px; padding: 2px; }
.remap div { width: 28px; padding: 5px 0 0 3px; text-align: center; }
.remap div span { display: block; height: 32px; }
.remap b { height: 99px; }
.slider { left: 305px; top: 280px; width: 321px; height: 35px; }
.slider > span:first-child { width: 123px; padding: 3px 0 0 9px; border-right: 2px solid #2c2c30; white-space: nowrap; }
.slider .track { position: relative; flex: 1; border-radius: 0 4px 4px 0; background: linear-gradient(#f6f6f6, #dedede 12px, #cfcfcf); }
.slider output { position: absolute; left: 58px; top: 3px; padding: 0 2px; background: linear-gradient(#e0e0e0, #d4d4d4); line-height: 24px; font-size: 16px; }
.slider input { appearance: none; width: 178px; height: 27px; margin: 2px 0 0 8px; background: repeating-linear-gradient(90deg, #b4b4b4 0 1px, transparent 1px 16px) 7px 5px / 163px 8px no-repeat, linear-gradient(#b4b4b4, #b4b4b4) 7px 13px / 163px 1px no-repeat; }
.slider input::-webkit-slider-thumb { appearance: none; width: 13px; height: 13px; border: 3px solid #000; border-radius: 50%; background: #fff; }
.dom { left: 685px; top: 288px; width: 102px; height: 70px; padding: 2px; }
.dom div { width: 28px; padding: 5px 0 0 4px; text-align: center; }
.dom b { height: 61px; }
.dom .out { margin: 20px 0 0 7px; }

.tip { position: absolute; left: 521px; top: 175px; width: 332px; padding-bottom: 4px; border: 1px solid #000; background: #ffffc0; font: 11px/16px "Liberation Sans", sans-serif; color: #111; }
.tip header { display: flex; align-items: center; gap: 12px; height: 33px; padding-left: 4px; background: #ffd060; font: 14px var(--canvas); }
.tip header svg { width: 24px; height: 24px; }
.tip p { padding: 4px 6px 8px; white-space: nowrap; }
.tip pre { margin: 0 4px; padding: 2px 4px 3px; border: 1px solid #4c4818; background: #e9e8ae; box-shadow: inset 0 0 4px #a9a770; font: 11px/12px "Liberation Mono", monospace; }
```
